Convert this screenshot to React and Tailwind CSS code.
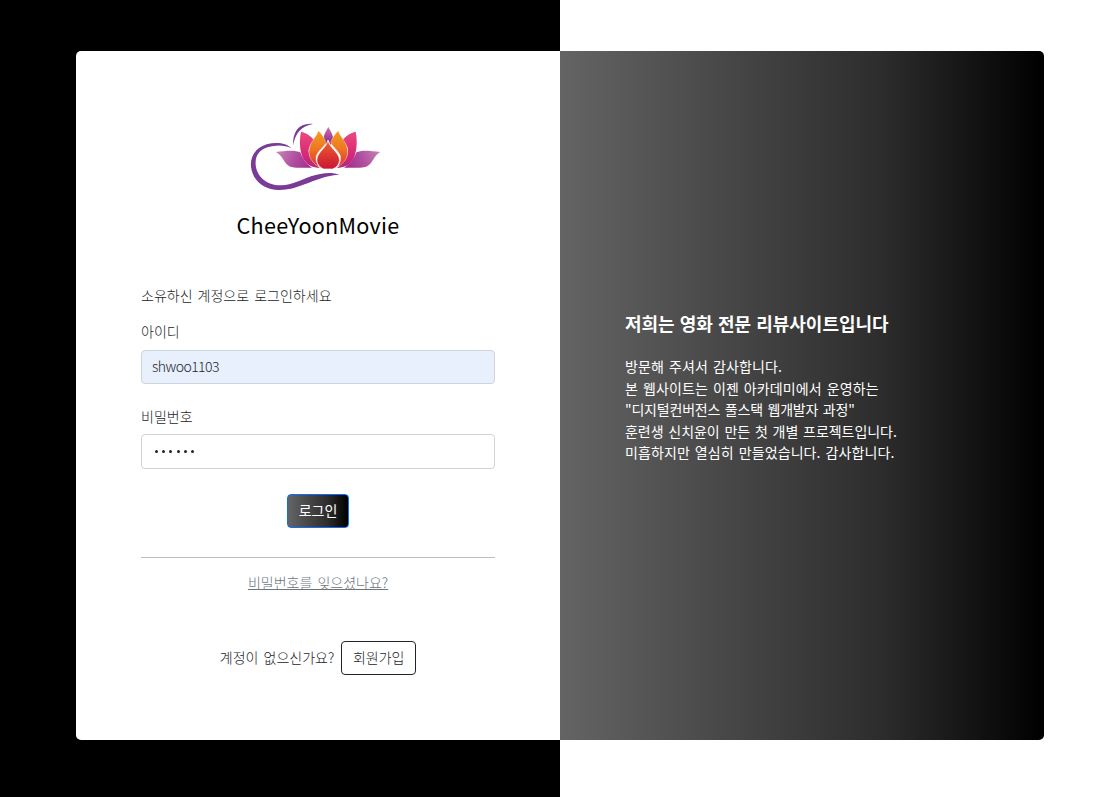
function Logo() {
  return (
    <svg className="block h-[85px] w-[150px]" viewBox="0 0 450 255" fill="none" aria-hidden="true">
      <defs>
        <linearGradient id="leafL" x1="110" y1="110" x2="215" y2="158" gradientUnits="userSpaceOnUse">
          <stop offset="0" stopColor="#c983b5" />
          <stop offset="0.5" stopColor="#b0509f" />
          <stop offset="1" stopColor="#a4268a" />
        </linearGradient>
        <linearGradient id="leafR" x1="420" y1="110" x2="315" y2="158" gradientUnits="userSpaceOnUse">
          <stop offset="0" stopColor="#c983b5" />
          <stop offset="0.5" stopColor="#b0509f" />
          <stop offset="1" stopColor="#a4268a" />
        </linearGradient>
        <linearGradient id="pink" x1="0" y1="50" x2="0" y2="158" gradientUnits="userSpaceOnUse">
          <stop offset="0" stopColor="#ea4a80" />
          <stop offset="0.55" stopColor="#dc2c77" />
          <stop offset="1" stopColor="#b3257f" />
        </linearGradient>
        <linearGradient id="orange" x1="0" y1="47" x2="0" y2="155" gradientUnits="userSpaceOnUse">
          <stop offset="0" stopColor="#f3a01d" />
          <stop offset="0.5" stopColor="#ee7623" />
          <stop offset="1" stopColor="#df3528" />
        </linearGradient>
        <linearGradient id="red" x1="0" y1="78" x2="0" y2="162" gradientUnits="userSpaceOnUse">
          <stop offset="0" stopColor="#ea6432" />
          <stop offset="0.5" stopColor="#dd3930" />
          <stop offset="1" stopColor="#cb1533" />
        </linearGradient>
        <linearGradient id="tip" x1="0" y1="36" x2="0" y2="80" gradientUnits="userSpaceOnUse">
          <stop offset="0" stopColor="#c877ae" />
          <stop offset="1" stopColor="#963092" />
        </linearGradient>
      </defs>
      <path d="M219 27C181 22 156 47 160 92C164 57 184 32 219 27Z" fill="#793b96" />
      <path d="M154 100C139 83 108 80 80 88C44 99 30 128 33 155C38 197 72 226 119 225C182 224 231 182 298 179C274 170 244 174 213 184C180 195 155 212 122 211C80 210 50 185 47 149C45 121 59 103 85 96C109 89 135 90 154 100Z" fill="#793b96" />
      <path d="M107 111C137 107 165 104 181 112C189 134 202 150 216 158C180 158 156 162 142 149C129 138 126 120 107 111Z" fill="url(#leafL)" />
      <path d="M421 111C391 107 363 104 349 112C341 134 326 150 312 158C348 158 374 162 388 149C401 138 404 120 421 111Z" fill="url(#leafR)" />
      <path d="M265 36C257 49 251 60 250 73L258 90L265 76L272 90L280 73C279 60 273 49 265 36Z" fill="url(#tip)" />
      <path d="M183 50C176 84 181 119 193 136C204 152 218 158 240 159C221 145 207 129 206 108C206 95 214 85 222 76C213 62 198 54 183 50Z" fill="url(#pink)" />
      <path d="M347 50C354 84 349 119 337 136C326 152 312 158 290 159C309 145 323 129 324 108C324 95 316 85 308 76C317 62 332 54 347 50Z" fill="url(#pink)" />
      <path d="M235 47C229 67 208 82 207 109C206 129 219 146 240 158C230 147 226 135 229 122C234 107 253 95 258 83C253 69 246 56 235 47Z" fill="url(#orange)" stroke="#fff" strokeWidth="1" />
      <path d="M295 47C301 67 322 82 323 109C324 129 311 146 290 158C300 147 304 135 301 122C296 107 277 95 272 83C277 69 284 56 295 47Z" fill="url(#orange)" stroke="#fff" strokeWidth="1" />
      <path d="M264 75C261 97 233 111 231 131C229 146 239 157 251 162H278C290 157 300 146 298 131C295 111 267 97 264 75Z" fill="url(#red)" stroke="#fff" strokeWidth="2" />
    </svg>
  );
}

export default function App() {
  return (
    <div className="flex h-[797px] w-[1114px] items-start bg-[linear-gradient(to_right,#000_560px,#fff_560px)] pt-[51px] pl-[76px] font-['Noto_Sans_CJK_KR',sans-serif] text-[14px] leading-[21.6px] text-[#212529]">
      <main className="grid h-[689px] w-[968px] grid-cols-2 overflow-hidden rounded-[5px]">
        <section className="flex flex-col bg-white px-[65px] pt-16 font-light [word-spacing:2px]">
          <header className="flex flex-col items-center">
            <div className="-ml-[6px]">
              <Logo />
            </div>
            <h1 className="mt-3 text-[21.6px] leading-[26px] font-normal tracking-[0.25px] text-black">CheeYoonMovie</h1>
          </header>
          <form className="mt-[47px] flex flex-col">
            <p>소유하신 계정으로 로그인하세요</p>
            <label htmlFor="user" className="mt-[14px] self-start">아이디</label>
            <input id="user" defaultValue="shwoo1103" className="mt-2 h-[34px] rounded-[4px] border border-[#ced4da] bg-[#e8f0fe] px-[10px] pb-[2px] tracking-[-0.55px] outline-none" />
            <label htmlFor="pass" className="mt-[22px] self-start">비밀번호</label>
            <div id="pass" className="mt-[6px] flex h-[35px] items-center gap-[4.2px] rounded-[4px] border border-[#ced4da] px-[13px]">
              {[0, 1, 2, 3, 4, 5].map((i) => (
                <span key={i} className="size-[3px] rounded-full bg-[#212529]" />
              ))}
            </div>
            <button type="button" className="mt-[25px] h-[34px] w-[62px] self-center rounded-[4px] border border-[#0d6efd] bg-[linear-gradient(to_right,#646464,#2d2d2d_66%,#000)] font-normal text-white">로그인</button>
          </form>
          <hr className="mt-[29px] border-[#bcbdbf]" />
          <a className="mt-[14px] self-center text-[#6c757d] underline">비밀번호를 잊으셨나요?</a>
          <div className="mt-[48px] flex items-center justify-center gap-[7px]">
            <p className="-mt-px">계정이 없으신가요?</p>
            <button type="button" className="h-[34px] w-[75px] rounded-[4px] border border-[#212529] pb-[2px]">회원가입</button>
          </div>
        </section>
        <section className="bg-[linear-gradient(to_right,#646464,#2d2d2d_66%,#000)] px-[65px] pt-[261px] text-white">
          <h2 className="text-[18px] leading-[22px] font-bold [word-spacing:1px]">저희는 영화 전문 리뷰사이트입니다</h2>
          <p className="mt-[22px] whitespace-nowrap [word-spacing:1.7px]">
            <span className="tracking-[0.12px]">방문해 주셔서 감사합니다.</span><br />
            <span className="tracking-[0.12px]">본 웹사이트는 이젠 아카데미에서 운영하는</span><br />
            <span className="tracking-[-0.2px]">"디지털컨버전스 풀스택 웹개발자 과정"</span><br />
            <span className="tracking-[-0.04px]">훈련생 신치윤이 만든 첫 개별 프로젝트입니다.</span><br />
            <span className="tracking-[0.1px]">미흡하지만 열심히 만들었습니다. 감사합니다.</span>
          </p>
        </section>
      </main>
    </div>
  );
}
